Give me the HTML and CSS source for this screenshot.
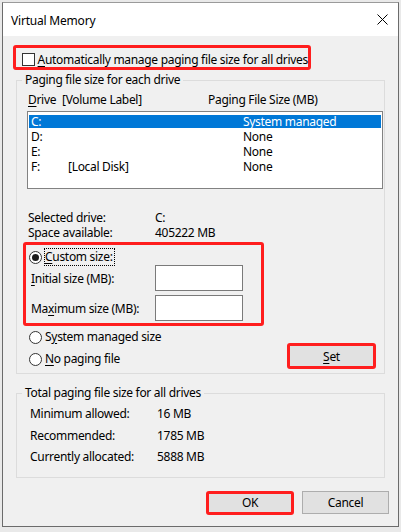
FILE: index.html
```html
<!DOCTYPE html>
<html lang="en">
<head>
    <meta charset="UTF-8">
    <meta name="viewport" content="width=device-width, initial-scale=1.0">
    <title>Virtual Memory</title>
    <link rel="stylesheet" href="styles.css">
</head>
<body>
    <div class="window">
        <div class="title-bar">
            <span class="title">Virtual Memory</span>
            <span class="close">
                <svg width="11" height="11" viewBox="0 0 11 11">
                    <path d="M0.5 0.5 L10.5 10.5 M10.5 0.5 L0.5 10.5" stroke="#000" stroke-width="1" fill="none"/>
                </svg>
            </span>
        </div>

        <div class="content">
            <div class="mark auto-box">
                <span class="check"></span>
                <span><u>A</u>utomatically manage paging file size for all drives</span>
            </div>

            <div class="group drives">
                <span class="group-title">Paging file size for each drive</span>

                <div class="list-head">
                    <span><u>D</u>rive</span>
                    <span>[Volume Label]</span>
                    <span>Paging File Size (MB)</span>
                </div>

                <div class="listbox">
                    <div class="row selected"><span>C:</span><span></span><span>System managed</span></div>
                    <div class="row"><span>D:</span><span></span><span>None</span></div>
                    <div class="row"><span>E:</span><span></span><span>None</span></div>
                    <div class="row"><span>F:</span><span>[Local Disk]</span><span>None</span></div>
                </div>

                <div class="info">
                    <span>Selected drive:</span><span>C:</span>
                    <span>Space available:</span><span>405222 MB</span>
                </div>

                <div class="mark custom-box">
                    <div class="radio-row custom">
                        <span class="radio checked"></span>
                        <span class="focus"><u>C</u>ustom size:</span>
                    </div>
                    <div class="size-row first">
                        <span class="size-label"><u>I</u>nitial size (MB):</span>
                        <input type="text" class="size-input">
                    </div>
                    <div class="size-row">
                        <span class="size-label">Ma<u>x</u>imum size (MB):</span>
                        <input type="text" class="size-input">
                    </div>
                </div>

                <div class="options">
                    <div class="option-list">
                        <div class="radio-row"><span class="radio"></span><span>S<u>y</u>stem managed size</span></div>
                        <div class="radio-row"><span class="radio"></span><span><u>N</u>o paging file</span></div>
                    </div>
                    <div class="mark set-box">
                        <button class="btn"><u>S</u>et</button>
                    </div>
                </div>
            </div>

            <div class="group totals">
                <span class="group-title">Total paging file size for all drives</span>
                <div class="total-grid">
                    <span>Minimum allowed:</span><span>16 MB</span>
                    <span>Recommended:</span><span>1785 MB</span>
                    <span>Currently allocated:</span><span>5888 MB</span>
                </div>
            </div>

            <div class="actions">
                <div class="mark ok-box">
                    <button class="btn">OK</button>
                </div>
                <button class="btn cancel">Cancel</button>
            </div>
        </div>
    </div>
</body>
</html>
```

FILE: styles.css
```css
body {
    margin: 0;
    background: #e9e9e9;
    font-family: "Noto Sans", Arial, sans-serif;
    font-size: 12px;
    letter-spacing: -0.3px;
    color: #000;
    white-space: nowrap;
}
u {
    text-decoration: underline;
    text-underline-offset: 2px;
}
.window {
    margin: 2px 0 0 2px;
    width: 397px;
    height: 525px;
    box-sizing: border-box;
    border: 1px solid #6b6b6b;
    border-top-color: #9a9a9a;
    background: #f0f0f0;
    display: flex;
    flex-direction: column;
}
.title-bar {
    height: 33px;
    background: #fff;
    display: flex;
    align-items: center;
    justify-content: space-between;
    padding: 1px 10px 0 8px;
    box-sizing: border-box;
}
.title {
    letter-spacing: -0.2px;
}
.close {
    display: flex;
    margin-top: -2px;
}
.content {
    padding: 9px 0 0 10px;
}
.mark {
    border: 3px solid #ff1e1e;
    border-radius: 3px;
    box-sizing: border-box;
}
.auto-box {
    width: 298px;
    height: 25px;
    display: flex;
    align-items: center;
    gap: 3px;
    padding: 3px 0 0 6px;
}
.check {
    width: 13px;
    height: 13px;
    box-sizing: border-box;
    border: 1px solid #333;
    background: #fff;
}
.group {
    position: relative;
    margin: 10px 0 0 3px;
    width: 369px;
    box-sizing: border-box;
    border: 1px solid #dcdcdc;
    padding: 0 1px 0 10px;
}
.group-title {
    position: absolute;
    top: -9px;
    left: 5px;
    padding: 0 3px;
    line-height: 16px;
    background: #f0f0f0;
}
.list-head {
    display: grid;
    grid-template-columns: 34px 146px auto;
    margin-top: 11px;
    padding-left: 1px;
    line-height: 16px;
}
.listbox {
    margin-top: 3px;
    width: 356px;
    height: 78px;
    box-sizing: border-box;
    border: 1px solid #828282;
    background: #fff;
    padding: 3px 1px 0;
    display: flex;
    flex-direction: column;
    gap: 2px;
}
.row {
    display: grid;
    grid-template-columns: 37px 175px auto;
    height: 13px;
    line-height: 13px;
    padding-left: 2px;
}
.row.selected {
    background: #0078d7;
    color: #fff;
}
.info {
    display: grid;
    grid-template-columns: 127px auto;
    margin-top: 21px;
    padding-left: 1px;
    line-height: 15px;
}
.custom-box {
    margin: 2px 0 0 -4px;
    width: 241px;
    height: 84px;
}
.radio-row {
    display: flex;
    align-items: center;
    gap: 3px;
    height: 16px;
    line-height: 16px;
}
.custom {
    margin-top: 4px;
    padding-left: 3px;
}
.radio {
    width: 13px;
    height: 13px;
    box-sizing: border-box;
    border: 1px solid #333;
    border-radius: 50%;
    background: #fff;
    display: flex;
    align-items: center;
    justify-content: center;
}
.radio.checked::after {
    content: "";
    width: 7px;
    height: 7px;
    border-radius: 50%;
    background: #1a1a1a;
}
.focus {
    outline: 1px dotted #000;
    padding: 0 1px 0 0;
}
.size-row {
    display: flex;
    align-items: center;
    padding-left: 5px;
    margin-top: 4px;
}
.size-row.first {
    margin-top: 0;
}
.size-label {
    width: 124px;
}
.size-input {
    width: 88px;
    height: 26px;
    box-sizing: border-box;
    border: 1px solid #7a7a7a;
    background: #fff;
    margin: 0;
    padding: 0;
}
.options {
    display: flex;
    justify-content: space-between;
    padding: 0 7px 4px 2px;
}
.option-list {
    display: flex;
    flex-direction: column;
    gap: 6px;
    margin-top: 3px;
}
.btn {
    font-family: "Noto Sans", Arial, sans-serif;
    font-size: 12px;
    letter-spacing: -0.3px;
    color: #000;
    background: #e1e1e1;
    border: 1px solid #adadad;
    margin: 0;
    padding: 0;
}
.set-box {
    margin-top: 17px;
    width: 89px;
    height: 26px;
    display: flex;
}
.mark .btn {
    flex: 1;
    border: none;
}
.totals {
    margin-top: 19px;
}
.total-grid {
    display: grid;
    grid-template-columns: 127px auto;
    line-height: 21.5px;
    padding: 9px 0 9px 3px;
}
.actions {
    display: flex;
    justify-content: flex-end;
    gap: 8px;
    margin: 13px 9px 0 0;
}
.ok-box {
    width: 88px;
    height: 24px;
    display: flex;
}
.cancel {
    width: 87px;
    height: 23px;
}
```
